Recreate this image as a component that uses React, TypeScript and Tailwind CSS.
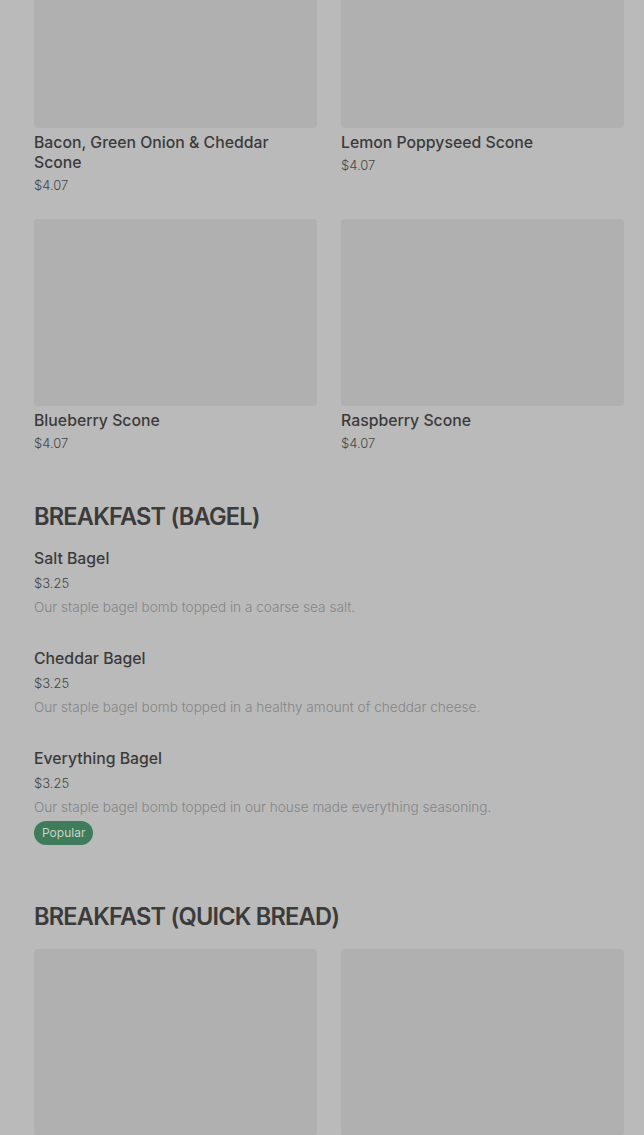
const sconeItems = [
  { name: 'Bacon, Green Onion & Cheddar Scone', price: '$4.07' },
  { name: 'Lemon Poppyseed Scone', price: '$4.07' },
  { name: 'Blueberry Scone', price: '$4.07' },
  { name: 'Raspberry Scone', price: '$4.07' },
]

const bagelItems = [
  { name: 'Salt Bagel', price: '$3.25', desc: 'Our staple bagel bomb topped in a coarse sea salt.' },
  { name: 'Cheddar Bagel', price: '$3.25', desc: 'Our staple bagel bomb topped in a healthy amount of cheddar cheese.' },
  { name: 'Everything Bagel', price: '$3.25', desc: 'Our staple bagel bomb topped in our house made everything seasoning.', popular: true },
]

function GridCard({ name, price }: { name: string; price: string }) {
  return (
    <div className="flex flex-col">
      <div className="h-[187px] rounded-sm bg-[#b0b0b0]" />
      <h3 className="mt-[5px] text-[15.8px] leading-5 font-medium text-[#3a3a3a]">{name}</h3>
      <p className="mt-[3px] text-[13px] leading-[18px] font-light text-[#444]">{price}</p>
    </div>
  )
}

function SectionTitle({ children }: { children: string }) {
  return (
    <h2 className="text-[23.6px] leading-8 font-semibold tracking-[-0.8px] text-[#3b3b3b]">{children}</h2>
  )
}

export default function App() {
  return (
    <div
      className="h-[1135px] overflow-hidden bg-[#bababa] pl-[34px] pr-[20px]"
      style={{ fontFamily: 'Inter, "Noto Sans", sans-serif' }}
    >
      <div className="-mt-[59px] grid grid-cols-2 gap-x-6 gap-y-[25px]">
        {sconeItems.map((item) => (
          <GridCard key={item.name} {...item} />
        ))}
      </div>

      <section className="mt-12 pt-px">
        <SectionTitle>BREAKFAST (BAGEL)</SectionTitle>
        <div className="mt-[14px] flex flex-col gap-7">
          {bagelItems.map((item) => (
            <div key={item.name} className="flex flex-col items-start">
              <h3 className="text-[15.8px] leading-6 font-medium text-[#3a3a3a]">{item.name}</h3>
              <p className="text-[13px] leading-6 font-light text-[#444]">{item.price}</p>
              <p className="text-[13.6px] leading-6 font-light text-[#858585]">{item.desc}</p>
              {item.popular && (
                <span className="mt-[2px] rounded-full bg-[#3e7c5b] px-2 text-[12px] leading-6 text-[#c6d6cd]">
                  Popular
                </span>
              )}
            </div>
          ))}
        </div>
      </section>

      <section className="mt-14">
        <SectionTitle>BREAKFAST (QUICK BREAD)</SectionTitle>
        <div className="mt-4 grid grid-cols-2 gap-x-6">
          <div className="h-[187px] rounded-sm bg-[#b0b0b0]" />
          <div className="h-[187px] rounded-sm bg-[#b0b0b0]" />
        </div>
      </section>
    </div>
  )
}
